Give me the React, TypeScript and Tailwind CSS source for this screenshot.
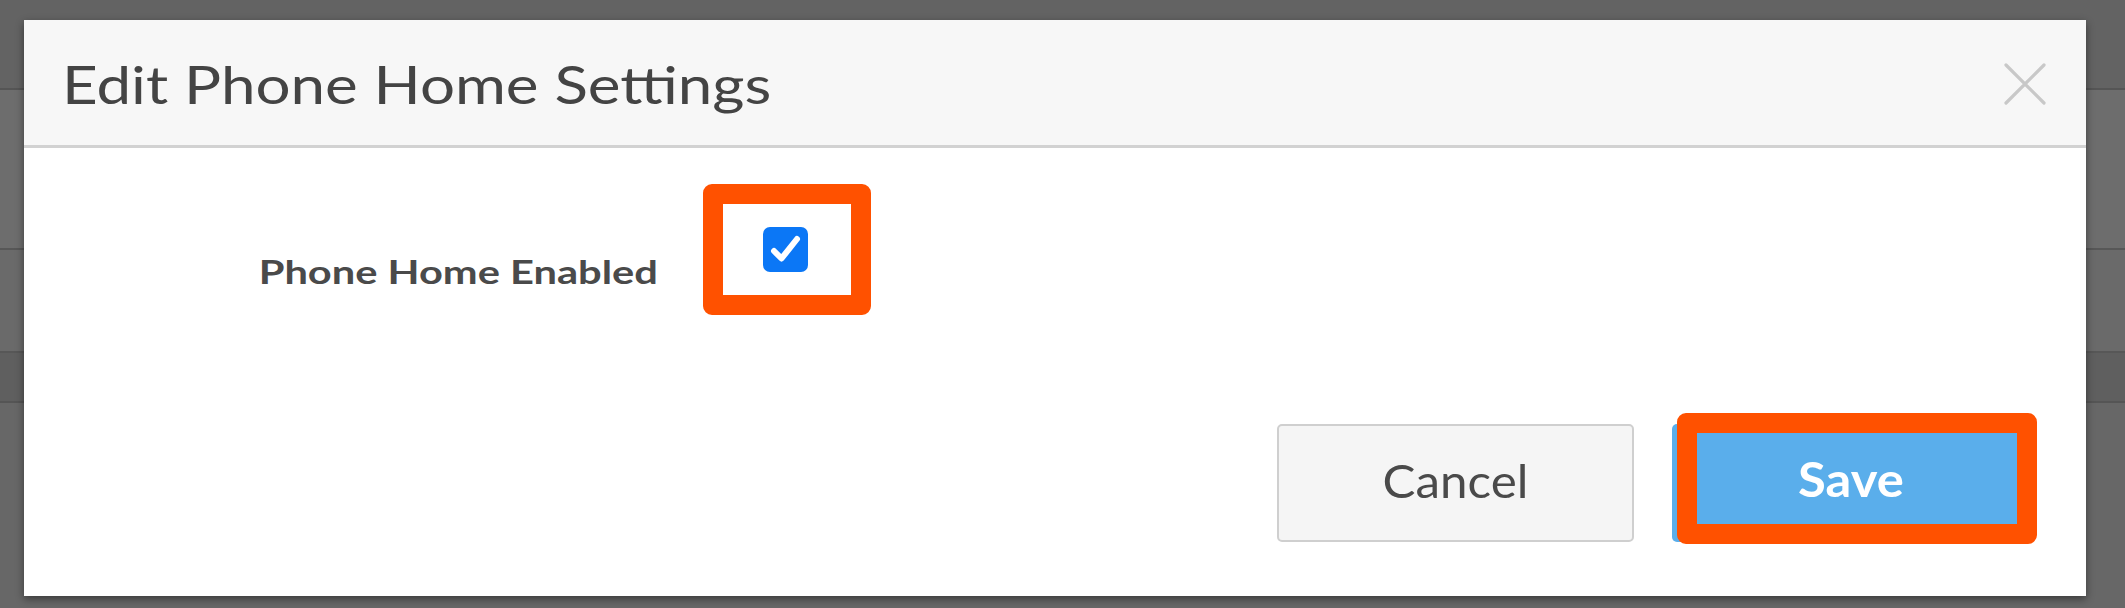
import React from "react";

export default function App() {
  return (
    <div className="relative w-[2125px] h-[608px] overflow-hidden bg-[#646464]" style={{ fontFamily: "Lato, 'Open Sans', sans-serif" }}>
      {/* dimmed background page */}
      <div className="flex flex-col w-full h-full">
        <div className="h-[90px] bg-[#636363] border-b-2 border-[#555]" />
        <div className="h-[160px] bg-[#6d6d6d] border-b-2 border-[#575757]" />
        <div className="h-[103px] bg-[#6a6a6a] border-b-2 border-[#575757]" />
        <div className="h-[50px] bg-[#5f5f5f] border-b-2 border-[#555]" />
        <div className="flex-1 bg-[#676767]" />
      </div>

      {/* modal */}
      <div className="absolute left-[24px] top-[20px] w-[2062px] h-[576px] bg-white flex flex-col shadow-[0_3px_8px_rgba(0,0,0,0.45)]">
        <div className="h-[128px] shrink-0 bg-[#f7f7f7] border-b-[3px] border-[#d2d2d2] flex items-center justify-between pl-[38px] pr-[40px]">
          <h2 className="inline-block origin-left scale-x-[1.19] text-[52px] leading-none text-[#444] font-normal mt-[2px]">Edit Phone Home Settings</h2>
          <svg width="42" height="42" viewBox="0 0 42 42" className="mt-[2px]">
            <path d="M2 2 L40 40 M40 2 L2 40" stroke="#c8c8c8" strokeWidth="3.2" strokeLinecap="round" />
          </svg>
        </div>

        <div className="flex items-start pt-[79px]">
          <div className="w-[634px] text-right pt-[29px]">
            <span className="inline-block origin-right scale-x-[1.28] text-[32.5px] font-bold text-[#4a4a4a] leading-none">Phone Home Enabled</span>
          </div>
          <div className="relative ml-[105px]">
            <div className="w-[45px] h-[45px] rounded-[7px] bg-[#0b77f6]">
              <svg width="45" height="45" viewBox="0 0 45 45">
                <path d="M11 24 L18.5 31.5 L34 12" fill="none" stroke="#fff" strokeWidth="6" strokeLinecap="round" strokeLinejoin="round" />
              </svg>
            </div>
            <div className="absolute left-[-60px] top-[-43px] w-[168px] h-[131px] border-[20px] border-[#ff5100] rounded-[9px] pointer-events-none" />
          </div>
        </div>

        <div className="flex justify-end items-start gap-[38px] mt-auto mb-[54px] pr-[57px]">
          <button className="w-[357px] h-[118px] pb-[6px] rounded-[5px] border-2 border-[#cfcfcf] bg-[#f5f5f5] text-[#4a4a4a] font-normal leading-none">
            <span className="inline-block scale-x-[1.05] text-[47px]">Cancel</span>
          </button>
          <div className="relative">
            <button className="w-[357px] h-[118px] pb-[8px] rounded-[5px] bg-[#5aaeeb] text-white font-bold leading-none">
              <span className="inline-block scale-x-[1.08] text-[47px]">Save</span>
            </button>
            <div className="absolute left-[5px] top-[-11px] w-[360px] h-[131px] border-[20px] border-[#ff5100] rounded-[9px] pointer-events-none" />
          </div>
        </div>
      </div>
    </div>
  );
}
